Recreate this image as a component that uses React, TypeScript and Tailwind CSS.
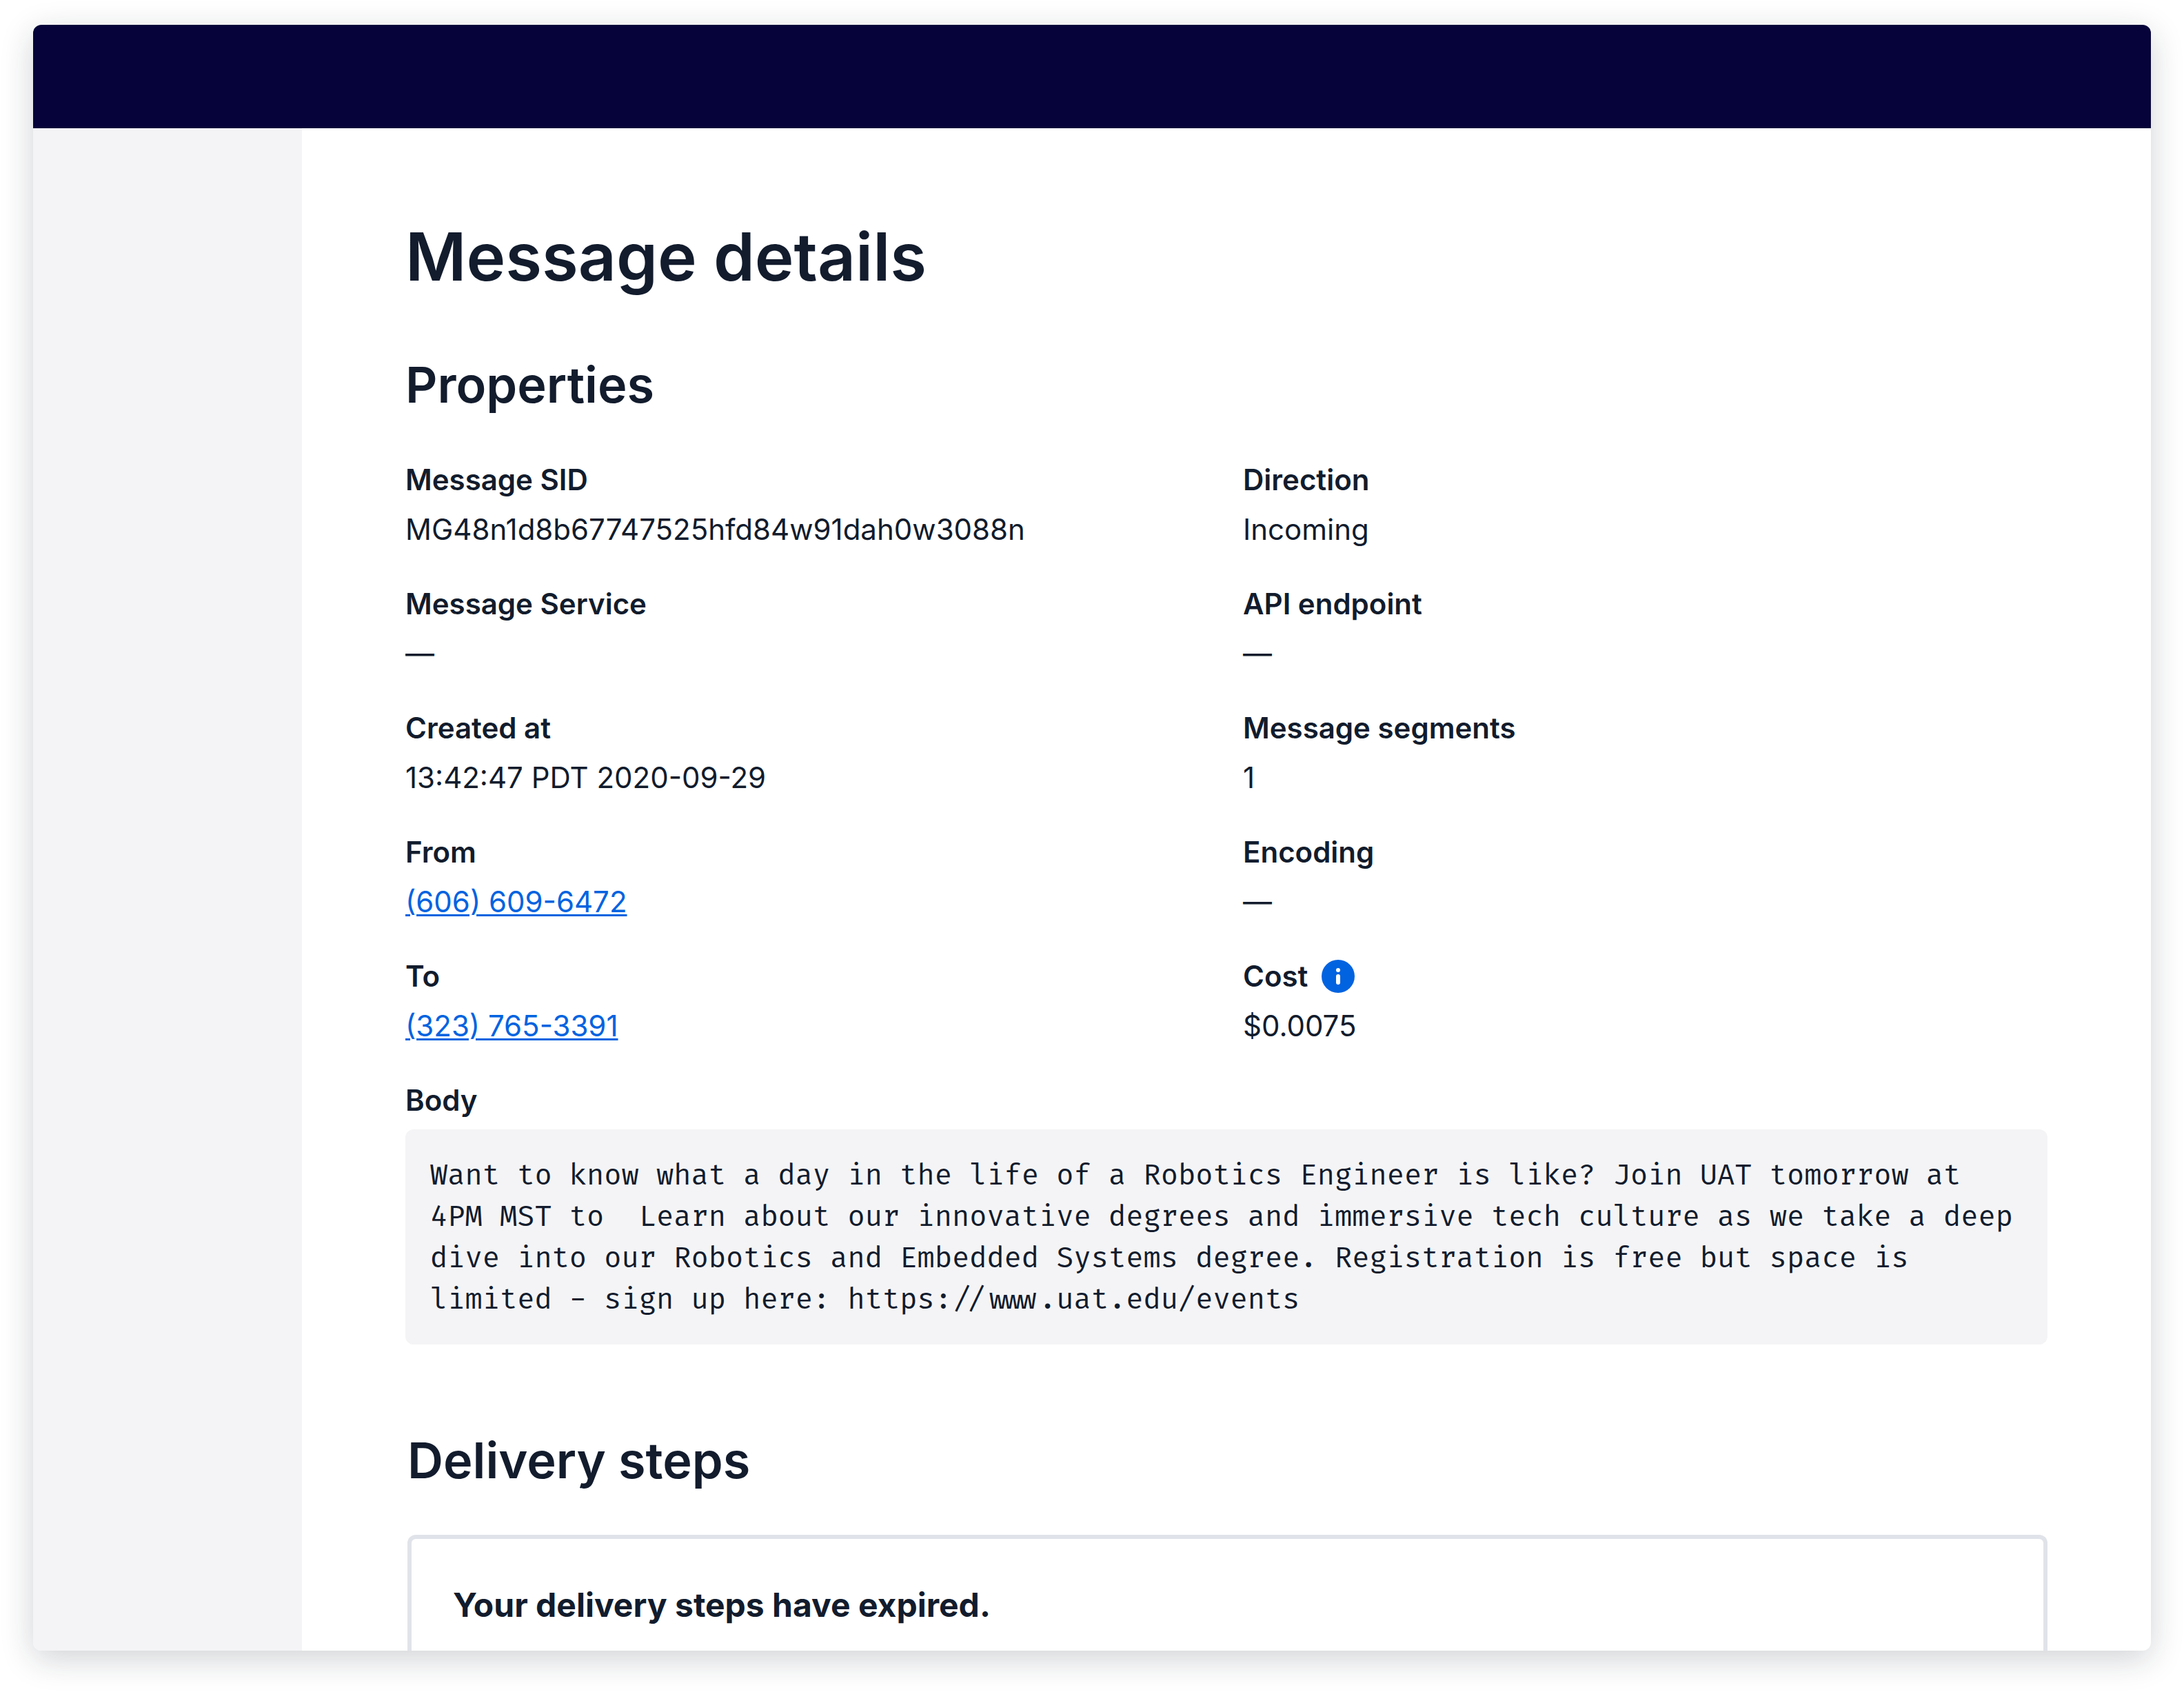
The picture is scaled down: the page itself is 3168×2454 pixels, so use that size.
import type { ReactNode } from "react";

type PropertyProps = {
  label: string;
  children: ReactNode;
  icon?: ReactNode;
};

function Property({ label, children, icon }: PropertyProps) {
  return (
    <div className="flex flex-col gap-3">
      <dt className="flex items-center gap-5 font-semibold">
        {label}
        {icon}
      </dt>
      <dd>{children}</dd>
    </div>
  );
}

function PhoneLink({ number }: { number: string }) {
  return (
    <a
      href={`tel:${number.replace(/\D/g, "")}`}
      className="text-[#0263e0] underline decoration-3 underline-offset-3"
    >
      {number}
    </a>
  );
}

function InfoButton() {
  return (
    <button type="button" aria-label="About cost" className="size-12 shrink-0">
      <svg viewBox="0 0 48 48" className="size-12" aria-hidden="true">
        <circle cx="24" cy="24" r="24" fill="#0263e0" />
        <circle cx="24" cy="15" r="3" fill="#fff" />
        <rect x="21" y="21" width="6" height="15" rx="3" fill="#fff" />
      </svg>
    </button>
  );
}

const body =
  "Want to know what a day in the life of a Robotics Engineer is like? Join UAT tomorrow at 4PM MST to  Learn about our innovative degrees and immersive tech culture as we take a deep dive into our Robotics and Embedded Systems degree. Registration is free but space is limited - sign up here: https://www.uat.edu/events";

export default function App() {
  return (
    <div className="flex min-h-screen flex-col bg-white px-12 pt-9 pb-15 font-['Inter',sans-serif] text-[42px] leading-[60px] text-[#121c2d]">
      <div className="flex grow flex-col overflow-hidden rounded-xl bg-white shadow-[0_12px_48px_rgba(18,28,45,0.2)]">
        <header className="h-[150px] shrink-0 bg-[#06033a]" />
        <div className="flex grow">
          <aside className="w-[390px] shrink-0 bg-[#f4f4f6]" />
          <main className="flex min-w-0 grow flex-col px-[150px] pt-30">
            <h1 className="text-[96px] leading-[132px] font-semibold">
              Message details
            </h1>

            <section className="mt-18">
              <h2 className="text-[72px] leading-24 font-semibold">
                Properties
              </h2>
              <dl className="mt-15 grid grid-cols-2 gap-12">
                <Property label="Message SID">
                  MG48n1d8b67747525hfd84w91dah0w3088n
                </Property>
                <Property label="Direction">Incoming</Property>
                <Property label="Message Service">—</Property>
                <Property label="API endpoint">—</Property>
                <Property label="Created at">13:42:47 PDT 2020-09-29</Property>
                <Property label="Message segments">1</Property>
                <Property label="From">
                  <PhoneLink number="(606) 609-6472" />
                </Property>
                <Property label="Encoding">—</Property>
                <Property label="To">
                  <PhoneLink number="(323) 765-3391" />
                </Property>
                <Property label="Cost" icon={<InfoButton />}>
                  $0.0075
                </Property>
                <div className="col-span-2 flex flex-col gap-3">
                  <dt className="font-semibold">Body</dt>
                  <dd className="rounded-xl bg-[#f4f4f6] px-9 pt-[38px] pb-[34px] font-['Fira_Code','DejaVu_Sans_Mono',monospace] text-[41px] whitespace-pre-wrap">
                    {body}
                  </dd>
                </div>
              </dl>
            </section>

            <section className="mt-30 flex grow flex-col pl-[3px]">
              <h2 className="text-[72px] leading-24 font-semibold">
                Delivery steps
              </h2>
              <div className="mt-15 grow rounded-t-xl border-6 border-b-0 border-[#e1e3ea] px-15 pt-15 pb-[30px]">
                <h3 className="text-[48px] leading-18 font-bold">
                  Your delivery steps have expired.
                </h3>
              </div>
            </section>
          </main>
        </div>
      </div>
    </div>
  );
}
